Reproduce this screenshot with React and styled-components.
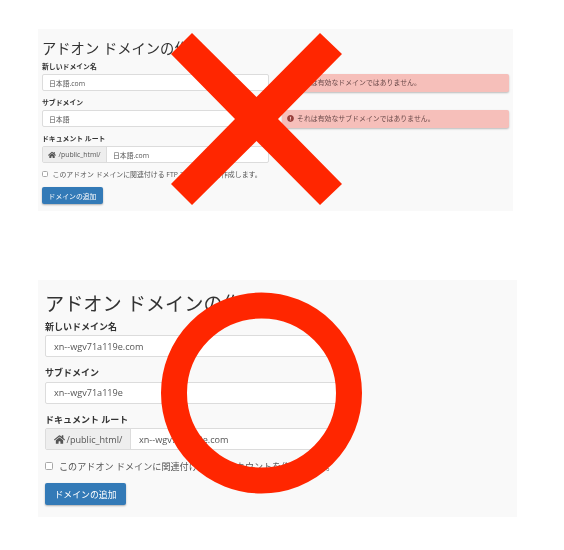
import React from "react";
import styled, { createGlobalStyle } from "styled-components";
import { FaHome, FaExclamationCircle } from "react-icons/fa";

const Global = createGlobalStyle`
  html, body { margin: 0; padding: 0; background: #fff; }
  body { font-family: "Open Sans", "Noto Sans CJK JP", sans-serif; color: #333; }
`;

const Page = styled.div`
  position: relative;
  width: 564px;
  height: 550px;
  overflow: hidden;
  padding-top: 29px;
  box-sizing: border-box;
`;

const Panel = styled.section`
  background: #f9f9f9;
  margin-left: 38px;
  box-sizing: border-box;
  width: ${(p) => (p.$large ? 479 : 475)}px;
  height: ${(p) => (p.$large ? 237 : 182)}px;
  margin-top: ${(p) => (p.$large ? 69 : 0)}px;
  padding: ${(p) => (p.$large ? "13px 0 0 7px" : "11px 0 0 4px")};
  filter: blur(0.4px);
`;

const Title = styled.h2`
  margin: 0;
  font-weight: 400;
  color: #333;
  font-size: ${(p) => (p.$large ? 19.2 : 14.3)}px;
  line-height: ${(p) => (p.$large ? 22 : 18)}px;
  height: ${(p) => (p.$large ? 23.5 : 18)}px;
  white-space: nowrap;
`;

const Label = styled.label`
  display: block;
  font-weight: 700;
  color: #333;
  font-size: ${(p) => (p.$large ? 9 : 6.85)}px;
  line-height: ${(p) => (p.$large ? 13.5 : 10)}px;
  margin-top: ${(p) => (p.$large ? 9 : 7)}px;
  margin-bottom: 2px;
  &:first-of-type { margin-top: ${(p) => (p.$large ? 3 : 4)}px; }
`;

const Row = styled.div`
  display: flex;
  align-items: flex-start;
`;

const Input = styled.div`
  box-sizing: border-box;
  flex: none;
  width: ${(p) => (p.$large ? 295 : 227)}px;
  height: ${(p) => (p.$large ? 22 : 17)}px;
  padding: 0 ${(p) => (p.$large ? 8 : 6)}px;
  display: flex;
  align-items: center;
  background: #fff;
  border: 1px solid #dcdcdc;
  border-radius: 2px;
  color: #555;
  font-size: ${(p) => (p.$large ? 9.1 : 6.85)}px;
  white-space: nowrap;
`;

const Group = styled.div`
  display: flex;
  box-sizing: border-box;
  width: ${(p) => (p.$large ? 295 : 227)}px;
  height: ${(p) => (p.$large ? 22 : 17)}px;
  background: #fff;
  border: 1px solid #dcdcdc;
  border-radius: 2px;
  color: #555;
  font-size: ${(p) => (p.$large ? 9.1 : 6.85)}px;
`;

const Addon = styled.div`
  flex: none;
  box-sizing: border-box;
  width: ${(p) => (p.$large ? 85 : 64)}px;
  display: flex;
  align-items: center;
  justify-content: center;
  gap: 2px;
  background: #eee;
  border-right: 1px solid #dcdcdc;
  white-space: nowrap;
  color: #555;
  svg { width: ${(p) => (p.$large ? 11 : 8)}px; height: ${(p) => (p.$large ? 11 : 8)}px; }
`;

const GroupValue = styled.div`
  display: flex;
  align-items: center;
  padding-left: ${(p) => (p.$large ? 8 : 6)}px;
  white-space: nowrap;
`;

const Alert = styled.div`
  box-sizing: border-box;
  flex: none;
  margin-left: 13px;
  width: 227px;
  height: 17.5px;
  margin-bottom: -0.5px;
  padding: 0 0 1px 5px;
  display: flex;
  align-items: center;
  gap: 3px;
  background: #f6bfba;
  border-radius: 2px;
  box-shadow: 0 1px 2px rgba(0, 0, 0, 0.25);
  color: #6b4a4a;
  font-size: 6.9px;
  white-space: nowrap;
  svg { width: 7px; height: 7px; color: #98403d; flex: none; }
`;

const CheckRow = styled.div`
  display: flex;
  align-items: center;
  color: #555;
  font-size: ${(p) => (p.$large ? 9.1 : 6.9)}px;
  gap: ${(p) => (p.$large ? 6 : 4.5)}px;
  height: ${(p) => (p.$large ? 12 : 10)}px;
  margin-top: ${(p) => (p.$large ? 10 : 6)}px;
  white-space: nowrap;
`;

const Check = styled.span`
  box-sizing: border-box;
  flex: none;
  width: ${(p) => (p.$large ? 8 : 6)}px;
  height: ${(p) => (p.$large ? 8 : 6)}px;
  background: #fff;
  border: 1px solid #a8a8a8;
  border-radius: 1.5px;
`;

const Button = styled.div`
  box-sizing: border-box;
  display: flex;
  align-items: center;
  justify-content: center;
  color: #fff;
  background: #337ab7;
  border-radius: 2px;
  box-shadow: 0 1px 2px rgba(0, 0, 0, 0.3);
  width: ${(p) => (p.$large ? 81 : 61)}px;
  height: ${(p) => (p.$large ? 22 : 17)}px;
  margin-top: ${(p) => (p.$large ? 11 : 8)}px;
  font-size: ${(p) => (p.$large ? 8.9 : 6.85)}px;
`;

const Mark = styled.svg`
  position: absolute;
  left: 0;
  top: 0;
  width: 564px;
  height: 550px;
  pointer-events: none;
`;

function DomainForm({ large, domain, sub, domainError, subError }) {
  return (
    <Panel $large={large}>
      <Title $large={large}>アドオン ドメインの作成</Title>
      <Label $large={large}>新しいドメイン名</Label>
      <Row>
        <Input $large={large}>{domain}</Input>
        {domainError && (
          <Alert>
            <FaExclamationCircle />
            それは有効なドメインではありません。
          </Alert>
        )}
      </Row>
      <Label $large={large}>サブドメイン</Label>
      <Row>
        <Input $large={large}>{sub}</Input>
        {subError && (
          <Alert>
            <FaExclamationCircle />
            それは有効なサブドメインではありません。
          </Alert>
        )}
      </Row>
      <Label $large={large}>ドキュメント ルート</Label>
      <Group $large={large}>
        <Addon $large={large}>
          <FaHome />
          /public_html/
        </Addon>
        <GroupValue $large={large}>{domain}</GroupValue>
      </Group>
      <CheckRow $large={large}>
        <Check $large={large} />
        このアドオン ドメインに関連付ける FTP アカウントを作成します。
      </CheckRow>
      <Button $large={large}>ドメインの追加</Button>
    </Panel>
  );
}

export default function App() {
  return (
    <Page>
      <Global />
      <DomainForm domain="日本語.com" sub="日本語" domainError subError />
      <DomainForm large domain="xn--wgv71a119e.com" sub="xn--wgv71a119e" />
      <Mark viewBox="0 0 564 550">
        <polygon
          fill="#ff2600"
          points="192,33 256.5,97 320,33 342,54 278,119 342,184 320,205 256.5,141 192,205 171,184 235,119 171,54"
        />
        <circle cx="261.5" cy="393" r="87.5" fill="none" stroke="#ff2600" strokeWidth="26" />
      </Mark>
    </Page>
  );
}
